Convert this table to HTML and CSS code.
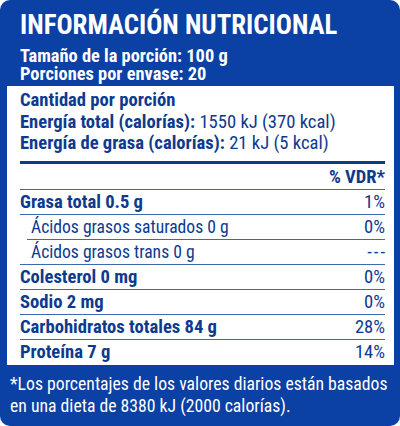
FILE: index.html
```html
<!DOCTYPE html>
<html lang="es">
<head>
    <meta charset="UTF-8">
    <meta name="viewport" content="width=device-width, initial-scale=1.0">
    <title>Información nutricional</title>
    <link rel="stylesheet" href="styles.css">
</head>
<body>

<div class="label">
    <div class="label-head">
        <h1 class="label-title">INFORMACIÓN NUTRICIONAL</h1>
        <div class="serving">Tamaño de la porción: 100 g</div>
        <div class="serving">Porciones por envase: 20</div>
    </div>

    <div class="panel">
        <div class="energy">
            <div><b>Cantidad por porción</b></div>
            <div><b>Energía total (calorías):</b> 1550 kJ (370 kcal)</div>
            <div><b>Energía de grasa (calorías):</b> 21 kJ (5 kcal)</div>
        </div>

        <div class="row row-vdr">
            <span></span>
            <b>% VDR*</b>
        </div>
        <div class="row">
            <b>Grasa total 0.5 g</b>
            <span>1%</span>
        </div>
        <div class="row row-sub row-cut">
            <span class="sub-name">Ácidos grasos saturados 0 g</span>
            <span>0%</span>
        </div>
        <div class="row row-sub">
            <span class="sub-name">Ácidos grasos trans 0 g</span>
            <span class="dashes">---</span>
        </div>
        <div class="row">
            <b>Colesterol 0 mg</b>
            <span>0%</span>
        </div>
        <div class="row">
            <b>Sodio 2 mg</b>
            <span>0%</span>
        </div>
        <div class="row">
            <b>Carbohidratos totales 84 g</b>
            <span>28%</span>
        </div>
        <div class="row row-last">
            <b>Proteína 7 g</b>
            <span>14%</span>
        </div>
    </div>

    <p class="footnote">*Los porcentajes de los valores diarios están basados<br>en una dieta de 8380 kJ (2000 calorías).</p>
</div>

</body>
</html>
```

FILE: styles.css
```css
body {
    margin: 0;
    background-color: #fff;
    font-family: "Liberation Sans Narrow", "Roboto Condensed", "Liberation Sans", Arial, sans-serif;
}

.label {
    width: 400px;
    height: 426px;
    box-sizing: border-box;
    background-color: #0b40a4;
    border-radius: 10px;
    color: #fff;
    padding-top: 9px;
}

.label-head {
    padding: 0 20px;
}

.label-title {
    margin: 0 0 6px 0;
    font-size: 26.8px;
    line-height: 32px;
    font-weight: bold;
}

.serving {
    font-size: 18.4px;
    line-height: 18px;
    font-weight: bold;
}

.panel {
    margin: 3px 6px 0 7px;
    height: 279px;
    box-sizing: border-box;
    background-color: #fff;
    color: #0d3a8e;
    padding: 4px 9px 0 13px;
    font-size: 18.6px;
}

.energy {
    line-height: 21.5px;
    padding-bottom: 6px;
    border-bottom: 3px solid #0d3a8e;
}

.row {
    display: flex;
    justify-content: space-between;
    line-height: 24px;
    border-bottom: 1px solid #3d68b2;
}

.row-vdr {
    padding-top: 1px;
}

.row-sub {
    padding-left: 11px;
}

.sub-name {
    font-size: 17.6px;
}

.dashes {
    letter-spacing: 2px;
    margin-right: -2px;
}

/* line under the saturated fat row starts a bit further in */
.row-cut {
    margin-left: 7px;
    padding-left: 4px;
}

.row-last {
    border-bottom: none;
}

.footnote {
    margin: 8px 0 0 0;
    padding: 0 10px;
    font-size: 17.7px;
    line-height: 22px;
}
```
